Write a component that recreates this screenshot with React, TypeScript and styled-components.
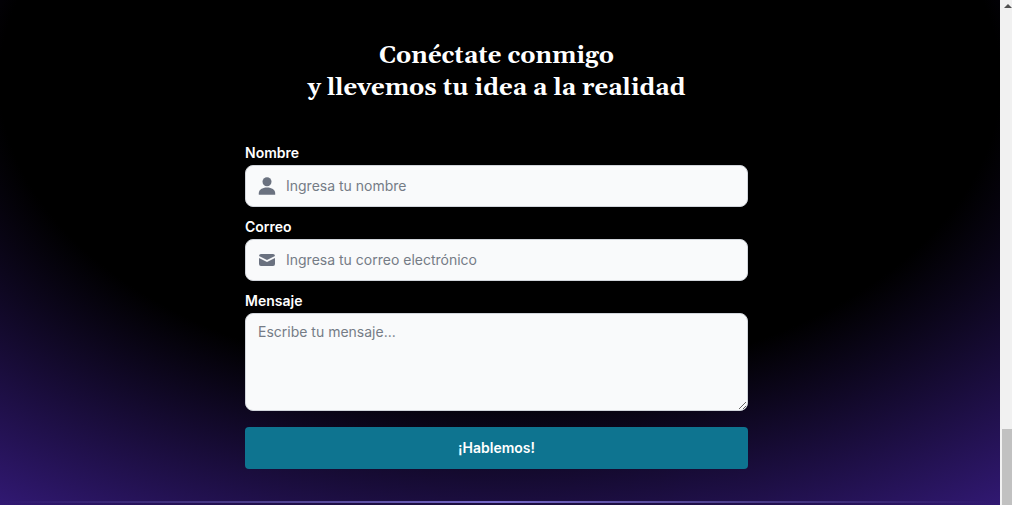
import React from "react";
import styled, { createGlobalStyle } from "styled-components";

const GlobalStyle = createGlobalStyle`
  *, *::before, *::after { box-sizing: border-box; }
  body {
    margin: 0;
    background: #000;
    color: #fff;
    font-family: Inter, "Liberation Sans", sans-serif;
    font-size: 14px;
    line-height: 20px;
  }
  button, input, textarea { font: inherit; }
`;

const Page = styled.div`
  display: flex;
  min-height: 100vh;
`;

const Main = styled.main`
  flex: 1;
  display: flex;
  flex-direction: column;
  align-items: center;
  min-width: 0;
  padding: 40px 7px 0 0;
  background: radial-gradient(125% 150% at 50% 16%, #000 40%, #6633ee 100%);
`;

const Heading = styled.h2`
  margin: 0 0 37px;
  font-family: Gelasio, Georgia, "DejaVu Serif Condensed", serif;
  font-size: 24px;
  font-weight: 700;
  line-height: 32px;
  text-align: center;
`;

const Form = styled.form`
  display: flex;
  flex-direction: column;
  gap: 8px;
  width: 503px;
  max-width: 100%;
`;

const Field = styled.div`
  display: flex;
  flex-direction: column;
`;

const Label = styled.label`
  font-weight: 600;
  line-height: 24px;
`;

const Control = styled.div`
  display: flex;
  align-items: center;
  gap: 9px;
  height: 42px;
  padding: 0 11px;
  border: 1px solid #d1d5db;
  border-radius: 8px;
  background: #f9fafb;
  color: #6b7280;
`;

const Input = styled.input`
  flex: 1;
  min-width: 0;
  padding: 0;
  border: 0;
  outline: 0;
  background: transparent;
  color: #111827;
  &::placeholder { color: #757c86; opacity: 1; }
`;

const Message = styled.textarea`
  display: block;
  width: 100%;
  height: 98px;
  padding: 8px 12px;
  border: 1px solid #d1d5db;
  border-radius: 8px;
  background: #f9fafb;
  color: #111827;
  resize: vertical;
  &::placeholder { color: #757c86; opacity: 1; }
`;

const Submit = styled.button`
  height: 42px;
  margin-top: 8px;
  border: 0;
  border-radius: 4px;
  background: #0e7490;
  color: #fff;
  font-weight: 600;
`;

const Divider = styled.hr`
  width: 100%;
  height: 2px;
  margin: 32px 0 0;
  border: 0;
  background: linear-gradient(90deg, transparent, #7568c8, transparent);
`;

const Scrollbar = styled.div`
  display: flex;
  flex-direction: column;
  justify-content: space-between;
  width: 12px;
  padding-left: 2px;
  background: #f1f1f1;
`;

const Thumb = styled.div`
  height: 15vh;
  background: #c1c1c1;
`;

const UserIcon = () => (
  <svg width="20" height="20" viewBox="0 0 20 20" fill="currentColor" aria-hidden="true">
    <circle cx="10" cy="5.8" r="4.5" />
    <path d="M1.8 18.8v-1.6c0-3.4 3.4-5.7 8.2-5.7s8.2 2.3 8.2 5.7v1.6Z" />
  </svg>
);

const MailIcon = () => (
  <svg width="20" height="20" viewBox="0 0 20 20" fill="currentColor" aria-hidden="true">
    <path d="M2.003 5.884 10 9.882l7.997-3.998A2 2 0 0 0 16 4H4a2 2 0 0 0-1.997 1.884Z" />
    <path d="m18 8.118-8 4-8-4V14a2 2 0 0 0 2 2h12a2 2 0 0 0 2-2V8.118Z" />
  </svg>
);

export default function App() {
  return (
    <Page>
      <GlobalStyle />
      <Main>
        <Heading>
          Conéctate conmigo
          <br />y llevemos tu idea a la realidad
        </Heading>
        <Form onSubmit={(e) => e.preventDefault()}>
          <Field>
            <Label htmlFor="nombre">Nombre</Label>
            <Control>
              <UserIcon />
              <Input id="nombre" type="text" placeholder="Ingresa tu nombre" />
            </Control>
          </Field>
          <Field>
            <Label htmlFor="correo">Correo</Label>
            <Control>
              <MailIcon />
              <Input id="correo" type="email" placeholder="Ingresa tu correo electrónico" />
            </Control>
          </Field>
          <Field>
            <Label htmlFor="mensaje">Mensaje</Label>
            <Message id="mensaje" placeholder="Escribe tu mensaje..." />
          </Field>
          <Submit type="submit">¡Hablemos!</Submit>
        </Form>
        <Divider />
      </Main>
      <Scrollbar aria-hidden="true">
        <svg width="10" height="10" viewBox="0 0 10 10" fill="#505050">
          <path d="M2 8 6 4l4 4Z" />
        </svg>
        <Thumb />
      </Scrollbar>
    </Page>
  );
}
